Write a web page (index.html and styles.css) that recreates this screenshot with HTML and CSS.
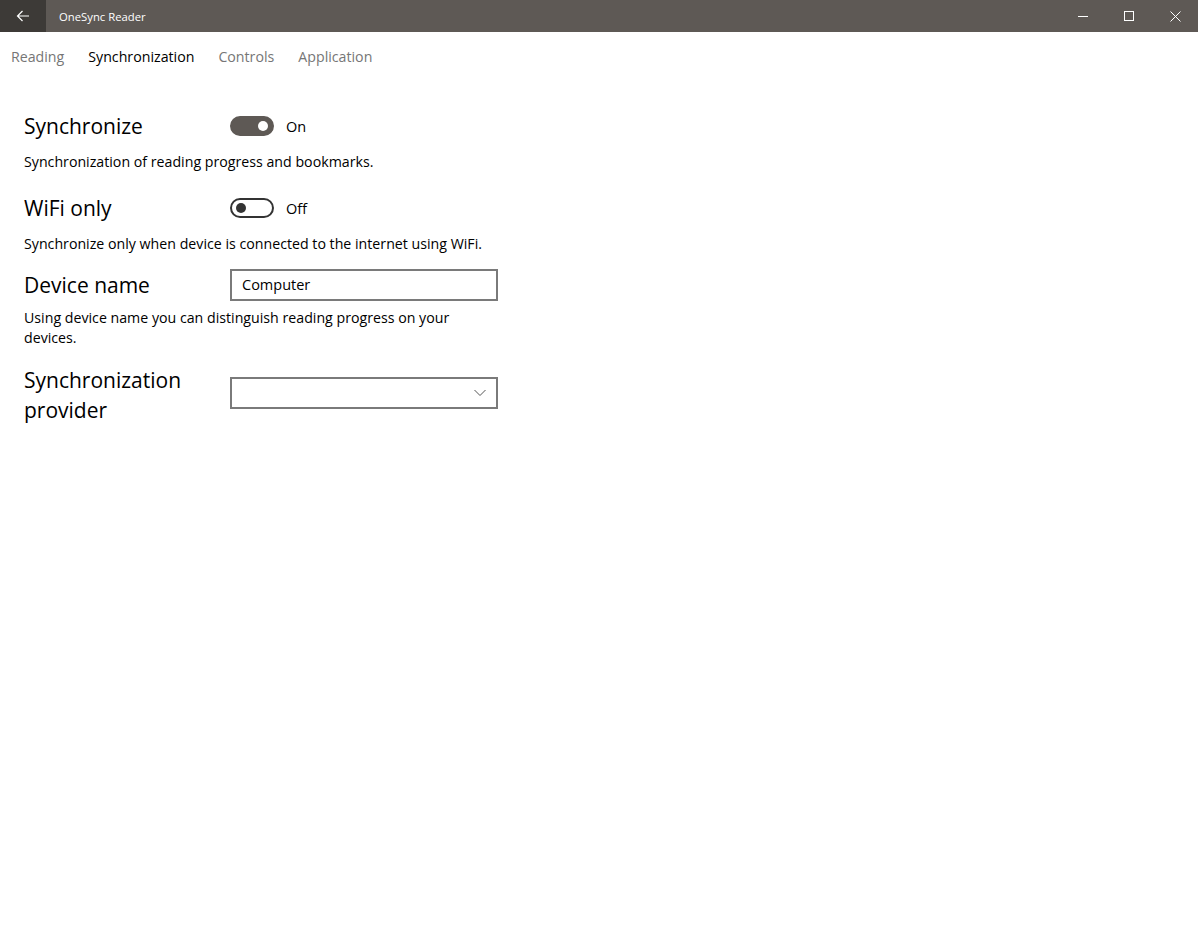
FILE: index.html
```html
<!DOCTYPE html>
<html>
<head>
    <link rel="stylesheet" href="styles.css">
</head>
<body>
    <div class="titlebar">
        <div class="back">
            <svg width="16" height="16" viewBox="0 0 16 16"><path d="M14 8H2.5M7.5 3L2.5 8l5 5" fill="none" stroke="#fff" stroke-width="1.2"/></svg>
        </div>
        <div class="app-title">OneSync Reader</div>
        <div class="caption">
            <div class="cap-btn"><svg width="10" height="10" viewBox="0 0 10 10"><path d="M0 5.5h10" stroke="#fff" stroke-width="1"/></svg></div>
            <div class="cap-btn"><svg width="10" height="10" viewBox="0 0 10 10"><rect x="0.5" y="0.5" width="9" height="9" fill="none" stroke="#fff" stroke-width="1"/></svg></div>
            <div class="cap-btn"><svg width="11" height="11" viewBox="0 0 11 11"><path d="M0.5 0.5l10 10M10.5 0.5l-10 10" stroke="#fff" stroke-width="1"/></svg></div>
        </div>
    </div>

    <div class="tabs">
        <span class="tab">Reading</span>
        <span class="tab active">Synchronization</span>
        <span class="tab">Controls</span>
        <span class="tab">Application</span>
    </div>

    <div class="settings">
        <div class="setting">
            <div class="row">
                <div class="label">Synchronize</div>
                <div class="toggle on"><span class="knob"></span></div>
                <span class="state">On</span>
            </div>
            <div class="desc">Synchronization of reading progress and bookmarks.</div>
        </div>

        <div class="setting short">
            <div class="row">
                <div class="label">WiFi only</div>
                <div class="toggle"><span class="knob"></span></div>
                <span class="state">Off</span>
            </div>
            <div class="desc">Synchronize only when device is connected to the internet using WiFi.</div>
        </div>

        <div class="setting text">
            <div class="row">
                <div class="label">Device name</div>
                <div class="textbox">Computer</div>
            </div>
            <div class="desc narrow">Using device name you can distinguish reading progress on your devices.</div>
        </div>

        <div class="setting">
            <div class="row top">
                <div class="label">Synchronization provider</div>
                <div class="combo">
                    <svg width="12" height="8" viewBox="0 0 12 8"><path d="M0.5 1l5.5 5.5L11.5 1" fill="none" stroke="#555" stroke-width="1"/></svg>
                </div>
            </div>
        </div>
    </div>
</body>
</html>
```

FILE: styles.css
```css
body {
    margin: 0;
    font-family: "Segoe UI", "Open Sans", "Noto Sans", sans-serif;
    background: #fff;
    color: #000;
}
.titlebar {
    display: flex;
    height: 32px;
    background-color: #5e5955;
    color: #fff;
    align-items: center;
}
.back {
    width: 46px;
    height: 32px;
    background-color: #3d3a37;
    display: flex;
    align-items: center;
    justify-content: center;
}
.app-title {
    font-size: 11.3px;
    margin-left: 13px;
    flex: 1;
}
.caption {
    display: flex;
}
.cap-btn {
    width: 46px;
    height: 32px;
    display: flex;
    align-items: center;
    justify-content: center;
}
.tabs {
    display: flex;
    gap: 24px;
    padding-left: 11px;
    padding-top: 1px;
    font-size: 14.2px;
    height: 47px;
    line-height: 48px;
}
.tab {
    color: #767676;
}
.tab.active {
    color: #000;
}
.settings {
    padding: 30px 24px 0;
}
.setting {
    margin-bottom: 20px;
}
.setting.short {
    margin-bottom: 15px;
}
.setting.text {
    margin-bottom: 17px;
}
.row {
    display: flex;
    align-items: center;
    height: 32px;
}
.row.top {
    height: auto;
    align-items: flex-start;
}
.label {
    width: 206px;
    font-size: 21px;
    line-height: 30px;
    flex-shrink: 0;
}
.toggle {
    width: 40px;
    height: 16px;
    border: 2px solid #333;
    border-radius: 10px;
    position: relative;
}
.toggle .knob {
    position: absolute;
    width: 10px;
    height: 10px;
    border-radius: 50%;
    background: #333;
    left: 4px;
    top: 3px;
}
.toggle.on {
    background: #5e5955;
    border-color: #5e5955;
}
.toggle.on .knob {
    background: #fff;
    left: 26px;
}
.state {
    font-size: 14.5px;
    margin-left: 12px;
}
.desc {
    font-size: 14.2px;
    line-height: 20px;
    margin-top: 10px;
}
.setting.text .desc {
    margin-top: 7px;
}
.desc.narrow {
    width: 460px;
}
.textbox, .combo {
    width: 264px;
    height: 28px;
    border: 2px solid #7a7a7a;
    font-size: 14.5px;
    line-height: 28px;
    padding: 0;
}
.textbox {
    padding-left: 10px;
    width: 254px;
}
.combo {
    margin-top: 12px;
    display: flex;
    align-items: center;
    justify-content: flex-end;
}
.combo svg {
    margin-right: 10px;
}
```
